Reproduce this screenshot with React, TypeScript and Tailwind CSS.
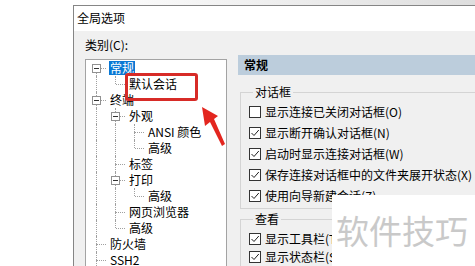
import { ReactNode } from "react";

type Node = {
  label: string;
  level: number;
  exp?: boolean;
  selected?: boolean;
  first?: boolean;
  last?: boolean;
  guides?: boolean[];
};

const tree: Node[] = [
  { label: "常规", level: 0, exp: true, selected: true, first: true },
  { label: "默认会话", level: 1, guides: [true], last: true },
  { label: "终端", level: 0, exp: true },
  { label: "外观", level: 1, exp: true, guides: [true] },
  { label: "ANSI 颜色", level: 2, guides: [true, true] },
  { label: "高级", level: 2, guides: [true, true], last: true },
  { label: "标签", level: 1, guides: [true] },
  { label: "打印", level: 1, exp: true, guides: [true] },
  { label: "高级", level: 2, guides: [true, true], last: true },
  { label: "网页浏览器", level: 1, guides: [true] },
  { label: "高级", level: 1, guides: [true], last: true },
  { label: "防火墙", level: 0 },
  { label: "SSH2", level: 0 },
];

const dialogOpts = [
  { label: "显示连接已关闭对话框(O)", checked: false },
  { label: "显示断开确认对话框(N)", checked: true },
  { label: "启动时显示连接对话框(W)", checked: true },
  { label: "保存连接对话框中的文件夹展开状态(X)", checked: true },
  { label: "使用向导新建会话(Z)", checked: true },
];

const viewOpts = [
  { label: "显示工具栏(T)", checked: true },
  { label: "显示状态栏(S)", checked: true },
];

const font = { fontFamily: '"Noto Sans CJK SC", "Noto Sans", sans-serif' };

const TreeRow = ({ node }: { node: Node }) => {
  const guides = node.guides ?? [];
  return (
    <div className="flex h-4 shrink-0 items-center">
      {guides.map((g, i) => (
        <div key={i} className="relative h-4 w-[19px] shrink-0">
          {g && <span className="absolute left-[9px] top-0 h-4 border-l border-dotted border-[#a0a0a0]" />}
        </div>
      ))}
      <div className="relative h-4 w-[19px] shrink-0">
        {!node.first && <span className="absolute left-[9px] top-0 h-[8px] border-l border-dotted border-[#a0a0a0]" />}
        {!node.last && <span className="absolute left-[9px] top-[8px] h-[8px] border-l border-dotted border-[#a0a0a0]" />}
        <span className="absolute left-[10px] top-[8px] w-[9px] border-t border-dotted border-[#a0a0a0]" />
        {node.exp && (
          <span className="absolute left-[5px] top-[4px] flex h-[9px] w-[9px] items-center justify-center border border-[#919191] bg-white">
            <span className="h-px w-[5px] bg-[#333]" />
          </span>
        )}
      </div>
      <span
        className={`ml-[3px] whitespace-nowrap px-px text-[12px] leading-[14px] ${
          node.selected ? "bg-[#0a78d4] text-white" : "text-black"
        }`}
      >
        {node.label}
      </span>
    </div>
  );
};

const Check = ({ checked }: { checked: boolean }) => (
  <span className="flex h-[12px] w-[12px] shrink-0 items-center justify-center border border-[#333] bg-white">
    {checked && (
      <svg width="10" height="10" viewBox="0 0 10 10">
        <polyline points="1.5,5 4,7.5 8.8,2" fill="none" stroke="#222" strokeWidth="1" />
      </svg>
    )}
  </span>
);

const Group = ({ title, className, children }: { title: string; className: string; children: ReactNode }) => (
  <fieldset className={`ml-[2px] w-[300px] shrink-0 border border-[#d4d4d4] ${className}`}>
    <legend className="ml-[4px] px-[2px] text-[12px] leading-[14px] text-black">{title}</legend>
    {children}
  </fieldset>
);

export default function App() {
  return (
    <div className="relative flex h-[266px] w-[475px] overflow-hidden bg-white" style={font}>
      <div className="w-[73px] shrink-0 bg-white" />
      <div className="flex min-w-0 flex-1 flex-col">
        <div className="h-[5px] shrink-0 bg-gradient-to-r from-white to-[#dedede]" />
        <div className="flex shrink-0 flex-col border-l border-t border-[#858585]">
          {/* title bar */}
          <div className="h-[25px] shrink-0 bg-white pl-[3px] pt-[5px] text-[12px] leading-[14px] text-black">全局选项</div>
          {/* body */}
          <div className="flex h-[300px] shrink-0 bg-[#f0f0f0]">
            <div className="flex shrink-0 flex-col pl-[11px] pt-[7px]">
              <div className="h-[14px] shrink-0 text-[12px] leading-[14px] text-black">类别(C):</div>
              <div className="mt-[7px] h-[240px] w-[142px] shrink-0 border border-[#a3a3a3] bg-white pl-px">
                {tree.map((n, i) => (
                  <TreeRow key={i} node={n} />
                ))}
              </div>
            </div>
            <div className="ml-[11px] flex min-w-0 flex-1 flex-col pt-[24px]">
              <div className="h-[20px] shrink-0 bg-[#bccddc] pl-[6px] text-[12px] font-bold leading-[20px] text-black">常规</div>
              <Group title="对话框" className="mt-[10px] pb-[2px] pl-[8px] pt-[2px]">
                {dialogOpts.map((o) => (
                  <div key={o.label} className="flex h-[21px] items-center gap-[4px]">
                    <Check checked={o.checked} />
                    <span className="whitespace-nowrap text-[12px] leading-[14px] text-black">{o.label}</span>
                  </div>
                ))}
              </Group>
              <Group title="查看" className="mt-[3px] pl-[8px] pt-[4px]">
                {viewOpts.map((o) => (
                  <div key={o.label} className="flex h-[18px] items-center gap-[4px]">
                    <Check checked={o.checked} />
                    <span className="whitespace-nowrap text-[12px] leading-[14px] text-black">{o.label}</span>
                  </div>
                ))}
              </Group>
            </div>
          </div>
        </div>
      </div>

      {/* red annotation box */}
      <div className="absolute left-[125px] top-[73px] h-[28px] w-[73px] rounded-[3px] border-[3px] border-[#d72b27]" />
      {/* red arrow */}
      <svg className="absolute left-[195px] top-[100px]" width="35" height="50" viewBox="0 0 35 50">
        <polygon points="7,7 23,16 19,19 30,44 27,46 15,22 10,26" fill="#e3261f" />
      </svg>

      {/* watermark */}
      <div className="absolute left-[332px] top-[195px] flex h-[71px] w-[143px] items-center bg-white pl-[4px]">
        <span className="whitespace-nowrap text-[33px] leading-none text-[#c9c9c9]">软件技巧</span>
      </div>
    </div>
  );
}
